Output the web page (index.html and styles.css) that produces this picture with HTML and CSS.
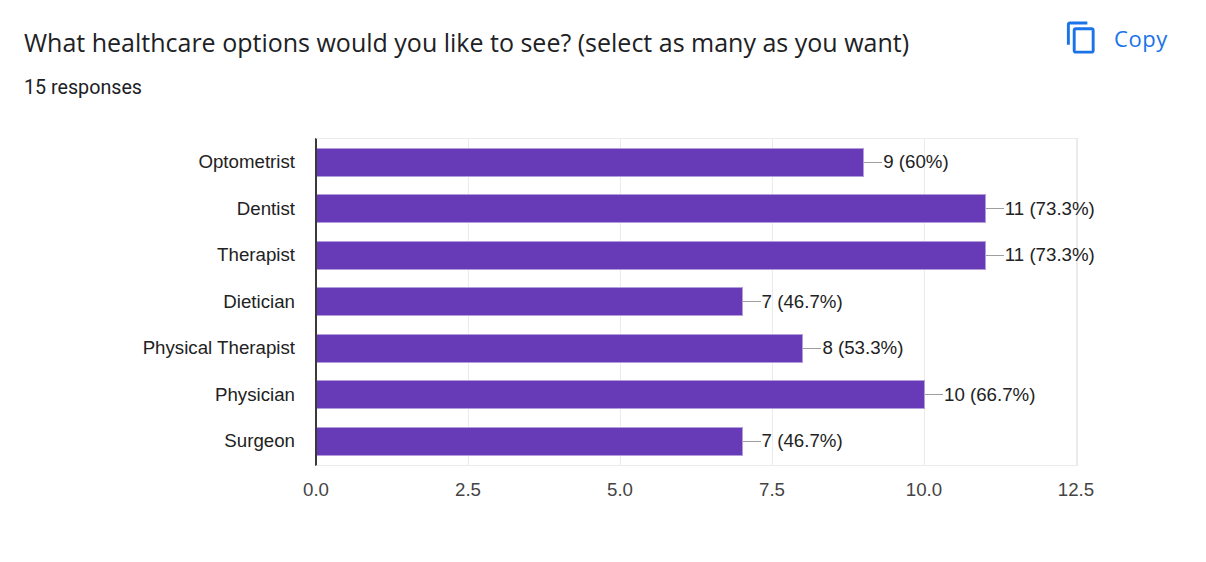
FILE: index.html
```html
<!DOCTYPE html>
<html>
<head>
<meta charset="utf-8">
<link rel="stylesheet" href="styles.css">
</head>
<body>
<div class="card">
  <div class="header">
    <div class="titles">
      <h1 class="title">What healthcare options would you like to see? (select as many as you want)</h1>
      <div class="count">15 responses</div>
    </div>
    <button class="copy">
      <svg class="copy-icon" viewBox="0 0 24 24" aria-hidden="true"><path d="M16 1H4c-1.1 0-2 .9-2 2v14h2V3h12V1zm3 4H8c-1.1 0-2 .9-2 2v14c0 1.1.9 2 2 2h11c1.1 0 2-.9 2-2V7c0-1.1-.9-2-2-2zm0 16H8V7h11v14z"/></svg>
      <span>Copy</span>
    </button>
  </div>

  <div class="chart">
    <div class="labels">
      <div class="label">Optometrist</div>
      <div class="label">Dentist</div>
      <div class="label">Therapist</div>
      <div class="label">Dietician</div>
      <div class="label">Physical Therapist</div>
      <div class="label">Physician</div>
      <div class="label">Surgeon</div>
    </div>
    <div class="plot">
      <div class="row"><div class="bar" style="width:72%"></div><div class="leader"></div><span class="value">9 (60%)</span></div>
      <div class="row"><div class="bar" style="width:88%"></div><div class="leader"></div><span class="value">11 (73.3%)</span></div>
      <div class="row"><div class="bar" style="width:88%"></div><div class="leader"></div><span class="value">11 (73.3%)</span></div>
      <div class="row"><div class="bar" style="width:56%"></div><div class="leader"></div><span class="value">7 (46.7%)</span></div>
      <div class="row"><div class="bar" style="width:64%"></div><div class="leader"></div><span class="value">8 (53.3%)</span></div>
      <div class="row"><div class="bar" style="width:80%"></div><div class="leader"></div><span class="value">10 (66.7%)</span></div>
      <div class="row"><div class="bar" style="width:56%"></div><div class="leader"></div><span class="value">7 (46.7%)</span></div>
    </div>
    <div class="spacer"></div>
    <div class="ticks">
      <span class="tick">0.0</span>
      <span class="tick">2.5</span>
      <span class="tick">5.0</span>
      <span class="tick">7.5</span>
      <span class="tick">10.0</span>
      <span class="tick">12.5</span>
    </div>
  </div>
</div>
</body>
</html>
```

FILE: styles.css
```css
html, body {
  margin: 0;
  padding: 0;
  background: #ffffff;
}

.card {
  width: 1206px;
  height: 562px;
  box-sizing: border-box;
  padding: 24px 0 0 24px;
}

.header {
  display: flex;
  justify-content: space-between;
  align-items: flex-start;
  padding-right: 38px;
}

.title {
  margin: 0;
  font-family: "Open Sans", "Liberation Sans", sans-serif;
  font-weight: 400;
  font-size: 25px;
  line-height: 36px;
  color: #202124;
}

.count {
  margin-top: 15px;
  font-family: "Roboto", "Liberation Sans", sans-serif;
  font-size: 19.7px;
  line-height: 26px;
  color: #202124;
}

.copy {
  display: flex;
  align-items: center;
  gap: 15px;
  border: none;
  background: none;
  padding: 0;
  margin-top: -4px;
  color: #1a73e8;
  font-family: "Open Sans", "Liberation Sans", sans-serif;
  font-size: 22px;
  font-weight: 500;
  letter-spacing: 0.6px;
}

.copy-icon {
  width: 35px;
  height: 35px;
  fill: #1a73e8;
}

.chart {
  margin-top: 36px;
  display: grid;
  grid-template-columns: 291px 763px;
  font-family: "Liberation Sans", Arial, sans-serif;
  font-size: 18.7px;
  color: #222222;
}

.labels {
  display: flex;
  flex-direction: column;
  padding-top: 2px;
}

.label {
  height: 46.5px;
  display: flex;
  align-items: center;
  justify-content: flex-end;
  padding-right: 20px;
}

.plot {
  height: 328px;
  box-sizing: border-box;
  margin-top: 1px;
  border-top: 1px solid #ebebeb;
  border-right: 1px solid #ebebeb;
  border-bottom: 1px solid #ebebeb;
  border-left: 2px solid #3a3a3a;
  background-image: linear-gradient(to right, #ebebeb 1px, transparent 1px);
  background-size: 152px 100%;
  background-position: -1px 0;
  display: flex;
  flex-direction: column;
  padding-top: 0;
}

.row {
  height: 46.5px;
  display: flex;
  align-items: center;
}

.bar {
  flex-shrink: 0;
  height: 29px;
  box-sizing: border-box;
  background: #673ab7;
  border: 1px solid #b39ddb;
  border-left: none;
}

.leader {
  flex-shrink: 0;
  width: 18px;
  height: 1px;
  background: #9e9e9e;
}

.value {
  white-space: nowrap;
  padding-left: 1px;
}

.ticks {
  display: flex;
  justify-content: space-between;
  margin-top: 13px;
  margin-left: 1px;
  width: 760px;
  color: #444444;
}

.tick {
  width: 0;
  display: flex;
  justify-content: center;
  white-space: nowrap;
}
```
